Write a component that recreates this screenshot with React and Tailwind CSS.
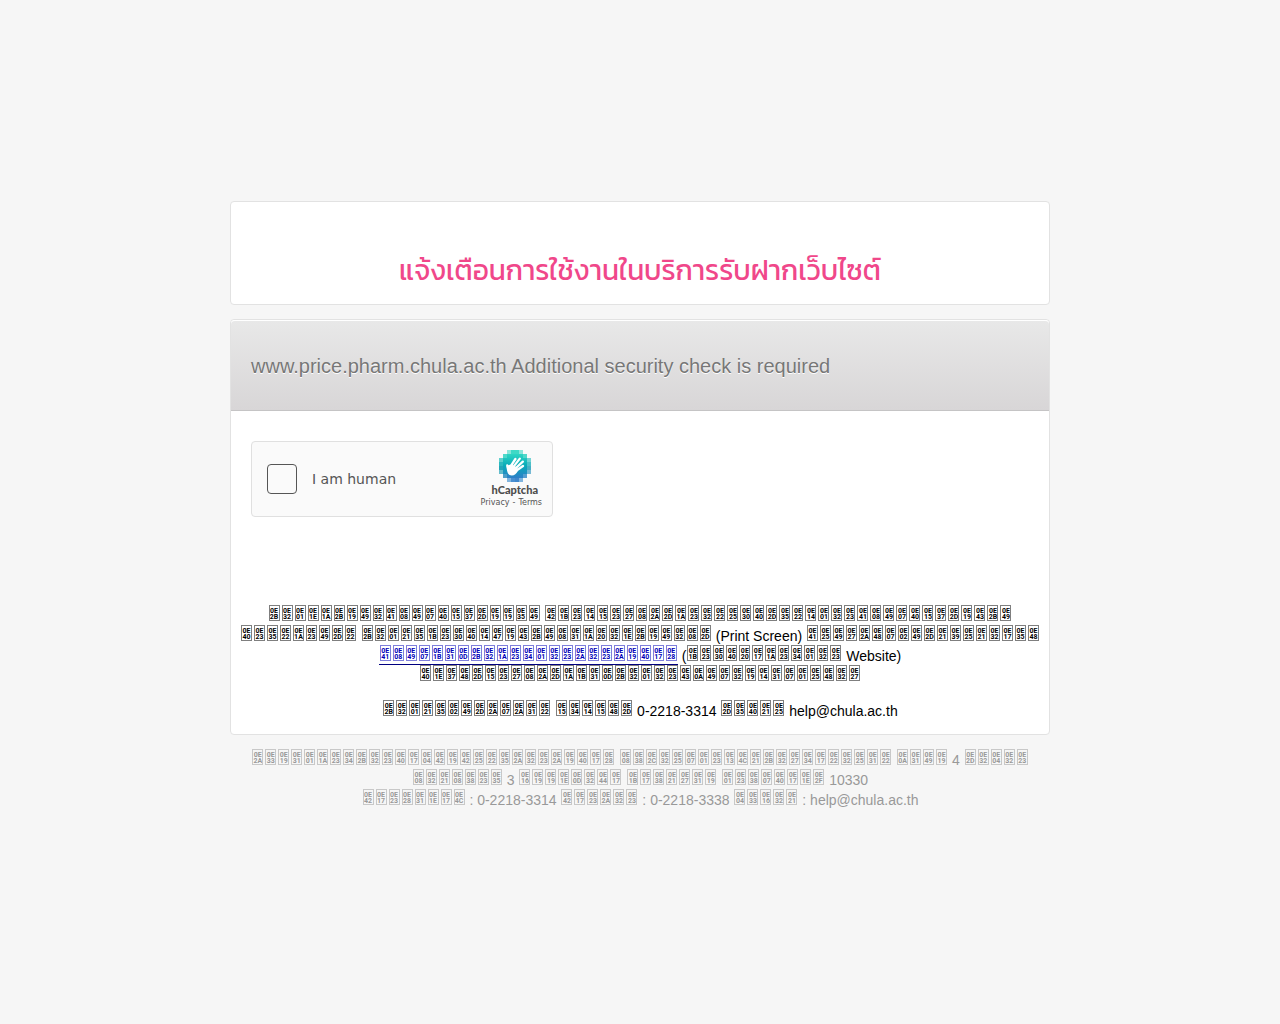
// Pixel mosaic behind the hand, one entry per 4x4 cell: x, y, fill
const MOSAIC = [
  [2, 0, '#8be5da'], [3, 0, '#3fd9c6'], [4, 0, '#3fd9c6'], [5, 0, '#8be5da'],
  [1, 1, '#4fd8ca'], [6, 1, '#4fd8ca'],
  [0, 2, '#5fd0cd'], [7, 2, '#74d3d4'],
  [0, 3, '#2bb9bf'], [7, 3, '#4cc0c8'],
  [0, 4, '#22a5b8'], [7, 4, '#47aec4'],
  [0, 5, '#63bccb'], [7, 5, '#76b9d4'],
  [1, 6, '#4f9fc8'], [6, 6, '#569dd0'],
  [2, 7, '#7fb4de'], [3, 7, '#4a8fd0'], [4, 7, '#3f87cc'], [5, 7, '#7fb4de'],
]

function CaptchaLogo() {
  return (
    <svg className="block h-8 w-8" viewBox="0 0 32 32" aria-hidden="true">
      <defs>
        <linearGradient id="sea" x1="0" y1="0" x2="0" y2="1">
          <stop offset="0" stopColor="#2ed6c3" />
          <stop offset="0.5" stopColor="#08a9b8" />
          <stop offset="1" stopColor="#2f7fc8" />
        </linearGradient>
      </defs>
      <g shapeRendering="crispEdges">
        {MOSAIC.map(([x, y, fill]) => (
          <rect key={`${x}-${y}`} x={x * 4} y={y * 4} width="4" height="4" fill={fill} />
        ))}
        <path fill="url(#sea)" d="M8 4h16v4h4v16h-4v4H8v-4H4V8h4z" />
      </g>
      <path
        fill="none"
        stroke="#fff"
        strokeWidth="2.3"
        strokeLinecap="round"
        d="M9.400 20 8.300 15.400M11.600 16.400 16.400 9M14 17.400 20.800 8.600M16 18.800 23.800 11.600M16.800 21 24 16"
      />
      <path fill="#fff" d="M7.600 16l3-1.200 2-.2 5.600 3 .6 3.400c-1.200 2.600-3.400 4.600-6 4.600-3.800 0-5-3.600-5.200-9.600z" />
    </svg>
  )
}

function Captcha() {
  return (
    <div className="flex h-[76px] w-[302px] items-center rounded border border-[#e0e0e0] bg-[#fafafa] pl-[15px] pr-[10px]">
      <input
        id="human"
        type="checkbox"
        className="h-[30px] w-[30px] appearance-none rounded border border-[#555] bg-[#fafafa]"
      />
      <label htmlFor="human" className="ml-[15px] grow font-['DejaVu_Sans',sans-serif] text-sm text-[#555]">
        I am human
      </label>
      <div className="flex flex-col items-center pt-[2px]">
        <div className="flex flex-col items-center pl-[7px]">
          <CaptchaLogo />
          <span className="mt-[2px] font-['Lato',sans-serif] text-[11px] leading-3 font-black text-[#4d4d4d]">hCaptcha</span>
        </div>
        <div className="flex gap-[3px] font-['DejaVu_Sans',sans-serif] text-[8px] leading-[14px] text-[#555]">
          <a href="#privacy">Privacy</a>
          <span>-</span>
          <a href="#terms">Terms</a>
        </div>
      </div>
    </div>
  )
}

// One framed box per character, showing its four-digit code point.
// Spaces stay ordinary spaces between the words.
function Codes({ text }) {
  return (
    <span role="text" aria-label={text}>
      {[...text].map((char, i) => {
        if (char === ' ') return ' '
        const hex = char.codePointAt(0).toString(16).toUpperCase().padStart(4, '0')
        return (
          <span
            key={i}
            className="mx-px -mt-1 inline-block h-4 w-[11px] overflow-hidden border border-current/50 pt-[2px] text-center font-['Roboto',sans-serif] text-[7px] leading-[6px] font-bold"
          >
            <span className="block">{hex.slice(0, 2)}</span>
            <span className="block">{hex.slice(2)}</span>
          </span>
        )
      })}
    </span>
  )
}

export default function App() {
  return (
    <div className="min-h-screen bg-[#f6f6f6] px-4 pt-[201px] pb-10 font-['Liberation_Sans',sans-serif] text-sm leading-5 text-black">
      <main className="mx-auto max-w-[820px]">
        <header className="rounded border border-[#e2e2e2] bg-white px-5 pt-12 pb-[14px] text-center">
          <h1 className="font-['Kanit','Prompt','Noto_Sans_Thai',sans-serif] text-[28px] leading-10 font-normal whitespace-nowrap text-[#f0478a]">
            แจ้งเตือนการใช้งานในบริการรับฝากเว็บไซต์
          </h1>
        </header>

        <section className="mt-[14px] rounded border border-[#e2e2e2] bg-white">
          <h2 className="rounded-t border-t border-b border-t-white border-b-[#c5c4c5] bg-linear-to-b from-[#e8e8e8] to-[#d8d6d7] px-5 pt-[31px] pb-[29px] text-xl leading-[29px] text-[#777] [text-shadow:0_1px_0_#fff]">
            www.price.pharm.chula.ac.th Additional security check is required
          </h2>

          <div className="px-5 pt-[30px]">
            <Captcha />
          </div>

          <div className="mt-[89px] pb-[13px] text-center">
            <p>
              <Codes text="หากพบหน้าแจ้งเตือนนี้ โปรดตรวจสอบรายละเอียดการแจ้งเตือนให้" />
              <br />
              <Codes text="เรียบร้อย หากมีประเด็นให้จับภาพหน้าจอ" /> (Print Screen) <Codes text="แล้วส่งข้อมูลมาที่" />
              <br />
              <a href="#report" className="border-b border-[#000080] text-[#0000b8]">
                <Codes text="แจ้งปัญหาบริการสารสนเทศ" />
              </a>{' '}
              (<Codes text="ประเภทบริการ" /> Website)
              <br />
              <Codes text="เพื่อตรวจสอบปัญหาการใช้งานดังกล่าว" />
            </p>
            <p className="mt-[15px]">
              <Codes text="หากมีข้อสงสัย ติดต่อ" /> 0-2218-3314 <Codes text="อีเมล" /> help@chula.ac.th
            </p>
          </div>
        </section>

        <footer className="mt-[15px] text-center text-[#999]">
          <Codes text="สำนักบริหารเทคโนโลยีสารสนเทศ จุฬาลงกรณ์มหาวิทยาลัย ชั้น" /> 4 <Codes text="อาคาร" />
          <br />
          <Codes text="จามจุรี" /> 3 <Codes text="ถนนพญาไท ปทุมวัน กรุงเทพฯ" /> 10330
          <br />
          <Codes text="โทรศัพท์" /> : 0-2218-3314 <Codes text="โทรสาร" /> : 0-2218-3338 <Codes text="คำถาม" /> : help@chula.ac.th
        </footer>
      </main>
    </div>
  )
}
